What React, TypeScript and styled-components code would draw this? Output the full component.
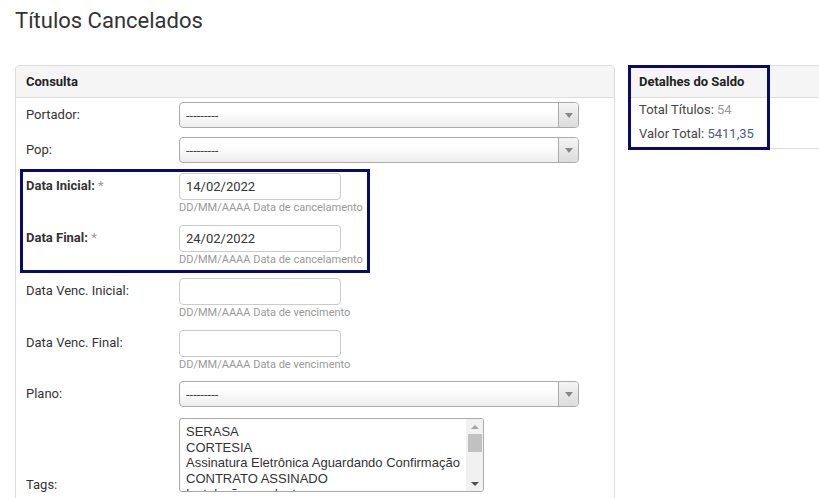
import React from 'react';
import styled, { createGlobalStyle } from 'styled-components';

const GlobalStyle = createGlobalStyle`
  html, body {
    margin: 0;
    padding: 0;
    background: #fff;
    overflow: hidden;
  }
  body {
    font-family: Roboto, 'Noto Sans', Arial, sans-serif;
    color: #333;
  }
`

const Page = styled.div`
  padding: 0 15px;
  width: 900px;
`

const Title = styled.h1`
  margin: 0;
  padding-top: 6px;
  font-size: 22px;
  font-weight: 400;
  line-height: 30px;
  color: #333;
`

const Columns = styled.div`
  display: flex;
  align-items: flex-start;
  gap: 13px;
  margin-top: 29px;
`

const Panel = styled.div<{ $width: number }>`
  position: relative;
  flex: 0 0 ${p => p.$width}px;
  box-sizing: border-box;
  border: 1px solid #ddd;
  border-radius: 4px 4px 0 0;
  background: #fff;
`

const PanelHeader = styled.div`
  height: 31px;
  line-height: 31px;
  padding: 0 10px;
  background: #f5f5f5;
  border-bottom: 1px solid #ddd;
  border-radius: 3px 3px 0 0;
  font-size: 13px;
  font-weight: 700;
  color: #222;
`

const FormBody = styled.div`
  padding: 4px 10px 0;
  height: 400px;
`

const Row = styled.div<{ $space: number; $bottom?: boolean }>`
  display: flex;
  align-items: ${p => (p.$bottom ? 'flex-end' : 'flex-start')};
  margin-bottom: ${p => p.$space}px;
`

const Label = styled.label<{ $strong?: boolean; $bottom?: boolean }>`
  flex: 0 0 153px;
  font-size: 13px;
  line-height: ${p => (p.$bottom ? '12px' : '26px')};
  padding-bottom: ${p => (p.$bottom ? '1px' : '0')};
  font-weight: ${p => (p.$strong ? 700 : 400)};
  color: #333;
`

const Required = styled.span`
  font-weight: 400;
  color: #999;
`

const Control = styled.div`
  display: flex;
  flex-direction: column;
`

const SelectBox = styled.div`
  box-sizing: border-box;
  display: flex;
  width: 400px;
  height: 26px;
  border: 1px solid #aaa;
  border-radius: 4px;
  background: linear-gradient(#fff 30%, #eee 100%);
  overflow: hidden;
`

const SelectValue = styled.div`
  flex: 1;
  padding: 0 6px;
  font-size: 13px;
  line-height: 25px;
  color: #444;
`

const SelectArrow = styled.div`
  flex: 0 0 19px;
  display: flex;
  align-items: center;
  justify-content: center;
  border-left: 1px solid #aaa;
  background: linear-gradient(#f4f4f4, #dcdcdc);

  &::after {
    content: '';
    border-left: 4px solid transparent;
    border-right: 4px solid transparent;
    border-top: 5px solid #888;
  }
`

const TextInput = styled.input`
  box-sizing: border-box;
  width: 162px;
  height: 27px;
  padding: 0 6px;
  border: 1px solid #ccc;
  border-radius: 4px;
  font-family: Roboto, Arial, sans-serif;
  font-size: 13px;
  color: #333;
  outline: none;
`

const Help = styled.span`
  font-size: 11px;
  line-height: 16px;
  color: #999;
`

const Highlight = styled.div`
  position: relative;

  &::after {
    content: '';
    position: absolute;
    left: -6px;
    top: -4px;
    width: 344px;
    height: 98px;
    border: 3px solid #0a0a6a;
    pointer-events: none;
  }
`

const ListBox = styled.div`
  box-sizing: border-box;
  display: flex;
  width: 305px;
  height: 74px;
  border: 1px solid #aaa;
  border-radius: 3px;
  overflow: hidden;
`

const Options = styled.div`
  flex: 1;
  padding: 5px 0 0 6px;
  font-family: 'Liberation Sans', Arial, sans-serif;
  font-size: 13px;
  line-height: 15.5px;
  color: #333;
  white-space: nowrap;
  overflow: hidden;
`

const ScrollTrack = styled.div`
  flex: 0 0 16px;
  display: flex;
  flex-direction: column;
  align-items: center;
  background: #f1f1f1;
  padding: 0 0 0 1px;
`

const ScrollArrow = styled.div<{ $down?: boolean }>`
  height: 15px;
  width: 100%;
  display: flex;
  align-items: center;
  justify-content: center;

  &::after {
    content: '';
    border-left: 4px solid transparent;
    border-right: 4px solid transparent;
    ${p => (p.$down ? 'border-top: 4px solid #505050;' : 'border-bottom: 4px solid #a3a3a3;')}
  }
`

const ScrollThumb = styled.div`
  width: 14px;
  height: 18px;
  background: #c1c1c1;
`

const ScrollFill = styled.div`
  flex: 1;
`

const SaldoBody = styled.div`
  padding: 0 10px 2px;
`

const SaldoLine = styled.div`
  font-size: 13px;
  line-height: 24px;
  color: #444;
`

const Value = styled.span<{ $tone: string }>`
  color: ${p => p.$tone};
`

const SaldoHighlight = styled.div`
  position: absolute;
  left: -1px;
  top: -1px;
  width: 142px;
  height: 85px;
  box-sizing: border-box;
  border: 3px solid #0a0a6a;
  pointer-events: none;
`

const Select = () => (
  <SelectBox>
    <SelectValue>---------</SelectValue>
    <SelectArrow />
  </SelectBox>
)

const DateField = ({ value, hint }: { value?: string; hint: string }) => (
  <Control>
    <TextInput defaultValue={value} />
    <Help>DD/MM/AAAA {hint}</Help>
  </Control>
)

const tags = [
  'SERASA',
  'CORTESIA',
  'Assinatura Eletrônica Aguardando Confirmação',
  'CONTRATO ASSINADO',
  'Instalação pendente',
]

export default function App() {
  return (
    <>
      <GlobalStyle />
      <Page>
        <Title>Títulos Cancelados</Title>
        <Columns>
          <Panel $width={600}>
            <PanelHeader>Consulta</PanelHeader>
            <FormBody>
              <Row $space={9}>
                <Label>Portador:</Label>
                <Select />
              </Row>
              <Row $space={10}>
                <Label>Pop:</Label>
                <Select />
              </Row>
              <Highlight>
                <Row $space={9}>
                  <Label $strong>Data Inicial: <Required>*</Required></Label>
                  <DateField value="14/02/2022" hint="Data de cancelamento" />
                </Row>
                <Row $space={10}>
                  <Label $strong>Data Final: <Required>*</Required></Label>
                  <DateField value="24/02/2022" hint="Data de cancelamento" />
                </Row>
              </Highlight>
              <Row $space={9}>
                <Label>Data Venc. Inicial:</Label>
                <DateField hint="Data de vencimento" />
              </Row>
              <Row $space={8}>
                <Label>Data Venc. Final:</Label>
                <DateField hint="Data de vencimento" />
              </Row>
              <Row $space={11}>
                <Label>Plano:</Label>
                <Select />
              </Row>
              <Row $space={10} $bottom>
                <Label $bottom>Tags:</Label>
                <ListBox>
                  <Options>
                    {tags.map(t => (
                      <div key={t}>{t}</div>
                    ))}
                  </Options>
                  <ScrollTrack>
                    <ScrollArrow />
                    <ScrollThumb />
                    <ScrollFill />
                    <ScrollArrow $down />
                  </ScrollTrack>
                </ListBox>
              </Row>
            </FormBody>
          </Panel>
          <Panel $width={230}>
            <PanelHeader>Detalhes do Saldo</PanelHeader>
            <SaldoBody>
              <SaldoLine>
                Total Títulos: <Value $tone="#999">54</Value>
              </SaldoLine>
              <SaldoLine>
                Valor Total: <Value $tone="#4e5c86">5411,35</Value>
              </SaldoLine>
            </SaldoBody>
            <SaldoHighlight />
          </Panel>
        </Columns>
      </Page>
    </>
  );
}
